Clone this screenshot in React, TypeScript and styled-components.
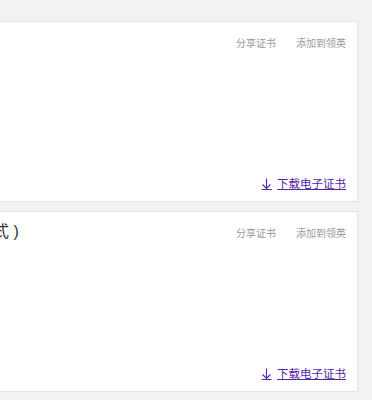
import React from "react";
import styled, { createGlobalStyle } from "styled-components";

const GlobalStyle = createGlobalStyle`
  html, body {
    margin: 0;
    padding: 0;
    background: #f3f2f0;
    overflow: hidden;
  }
  body {
    font-family: "Liberation Sans", "Noto Sans CJK SC", sans-serif;
  }
`;

const List = styled.div`
  display: flex;
  flex-direction: column;
  gap: 9px;
  padding-top: 21px;
  margin-left: -152px;
  margin-right: 14px;
`;

const Card = styled.div`
  box-sizing: border-box;
  height: 181px;
  background: #fff;
  border: 1px solid #e4e3e1;
  padding: 10px 11px 10px 16px;
  display: flex;
  flex-direction: column;
`;

const Header = styled.div`
  display: flex;
  justify-content: space-between;
  align-items: flex-start;
`;

const Title = styled.div`
  font-size: 16px;
  line-height: 20px;
  color: #333;
  white-space: nowrap;
`;

const Actions = styled.div`
  display: flex;
  gap: 20px;
  margin-top: 5px;
`;

const Action = styled.a`
  font-size: 10px;
  line-height: 14px;
  color: #999;
  cursor: pointer;
`;

const Footer = styled.div`
  margin-top: auto;
  display: flex;
  justify-content: flex-end;
`;

const Download = styled.a`
  display: flex;
  align-items: center;
  gap: 5px;
  font-size: 11.5px;
  line-height: 14px;
  color: #5526a6;
  cursor: pointer;

  span {
    text-decoration: underline;
  }
`;

const DownloadIcon = () => (
  <svg width="11" height="12" viewBox="0 0 11 12" fill="none" stroke="#5526a6" strokeWidth="1.1">
    <path d="M5.5 0.5v10M1.5 6.5l4 4 4-4M0.5 11.5h10" />
  </svg>
);

const certificates = [
  { id: 1, title: "数据分析" },
  { id: 2, title: "在线课程（远程形式 )" },
];

const App = () => (
  <>
    <GlobalStyle />
    <List>
      {certificates.map((c) => (
        <Card key={c.id}>
          <Header>
            <Title>{c.title}</Title>
            <Actions>
              <Action>分享证书</Action>
              <Action>添加到领英</Action>
            </Actions>
          </Header>
          <Footer>
            <Download>
              <DownloadIcon />
              <span>下载电子证书</span>
            </Download>
          </Footer>
        </Card>
      ))}
    </List>
  </>
);

export default App;
